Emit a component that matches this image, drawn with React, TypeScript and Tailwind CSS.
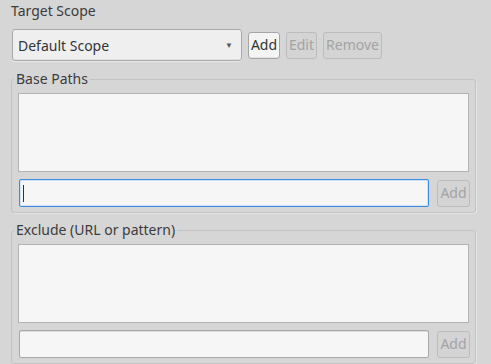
import React from "react";

function Btn({ children, disabled, className = "" }: { children: React.ReactNode; disabled?: boolean; className?: string }) {
  return (
    <div
      className={
        "flex items-center justify-center h-[27px] rounded-[3px] border leading-none " +
        (disabled
          ? "border-[#bcbcbc] bg-[#d4d4d4] text-[#a3a3a3] "
          : "border-[#a6a6a6] bg-[#f4f4f4] text-[#2e3436] shadow-[inset_0_-1px_0_#e2e2e2] ") +
        className
      }
    >
      {children}
    </div>
  );
}

function Group({ title, focused }: { title: string; focused?: boolean }) {
  return (
    <div className="relative w-[465px] rounded-[3px] border border-[#c3c3c3] shadow-[1px_1px_0_#e4e4e4] pl-[6px] pr-[5px] pt-[13px] pb-[5px]">
      <span className="absolute left-[2px] top-[-10px] bg-[#d6d6d6] px-[2px] leading-[18px] text-[#3c3c3c]">
        {title}
      </span>
      <div className="h-[79px] w-[451px] border border-[#b3b3b3] bg-[#f6f6f6]" />
      <div className="mt-[7px] flex items-center">
        <div
          className={
            "ml-[1px] h-[28px] w-[410px] rounded-[2px] bg-[#f6f6f6] flex items-center " +
            (focused
              ? "border border-[#3d8ee0] shadow-[inset_0_0_0_1px_#cfe3f7]"
              : "border border-[#a8a8a8] shadow-[inset_0_1px_0_#dcdcdc]")
          }
        >
          {focused && <div className="ml-[3px] h-[17px] w-[1px] bg-[#2e3436]" />}
        </div>
        <Btn disabled className="ml-[8px] w-[33px]">
          Add
        </Btn>
      </div>
    </div>
  );
}

export default function App() {
  return (
    <div
      className="w-[491px] h-[364px] overflow-hidden bg-[#d6d6d6] text-[14px] text-[#333638] pl-[11px]"
      style={{ fontFamily: "'Noto Sans', 'Open Sans', sans-serif" }}
    >
      <div className="mt-[1px] leading-[20px] text-[#3c3c3c]">Target Scope</div>
      <div className="mt-[8px] flex items-center">
        <div className="ml-[1px] flex h-[32px] w-[230px] items-center justify-between rounded-[3px] border border-[#a9a9a9] bg-[#efefef] pl-[5px] pr-[8px] shadow-[inset_0_-1px_0_#e0e0e0,0_1px_0_#e8e8e8]">
          <span>Default Scope</span>
          <span className="text-[8px] text-[#5a5a5a]">▼</span>
        </div>
        <Btn className="ml-[6px] w-[32px]">Add</Btn>
        <Btn disabled className="ml-[6px] w-[31px]">
          Edit
        </Btn>
        <Btn disabled className="ml-[6px] w-[59px]">
          Remove
        </Btn>
      </div>
      <div className="mt-[18px]">
        <Group title="Base Paths" focused />
      </div>
      <div className="mt-[17px]">
        <Group title="Exclude (URL or pattern)" />
      </div>
    </div>
  );
}
